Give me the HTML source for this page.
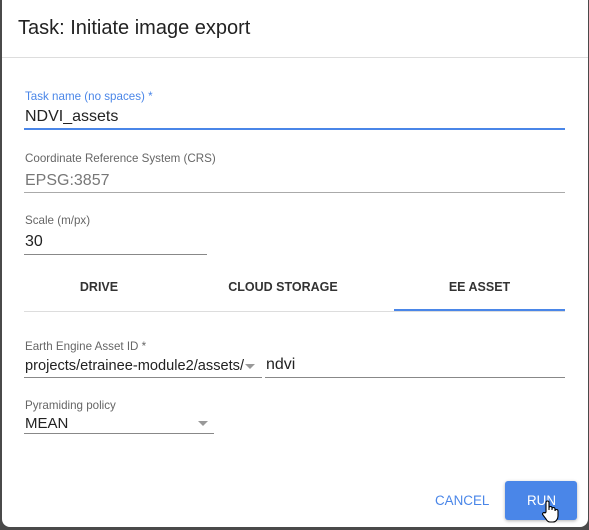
<!DOCTYPE html>
<html><head><style>
body{margin:0;width:589px;height:530px;background:#4a4a4a;position:relative;overflow:hidden;font-family:"Liberation Sans",Arial,sans-serif}
.dlg{position:absolute;left:2px;top:0;width:586px;height:527px;background:#fff;border-radius:0 0 8px 8px}
.a{position:absolute;white-space:nowrap}
.lbl{font-size:11.6px;color:#666}
.val{font-size:16px;color:#222}
.ln{position:absolute;height:1px;background:#888}
.tab{position:absolute;top:280px;font-size:12.5px;font-weight:bold;color:#333;text-align:center}
</style></head><body>
<div class="dlg"></div>
<div class="a" style="left:18px;top:17px;font-size:20px;color:#222">Task: Initiate image export</div>
<div style="position:absolute;left:2px;top:57px;width:586px;height:1px;background:#ddd"></div>

<div class="a lbl" style="left:25px;top:90px;color:#4a86e8">Task name (no spaces) *</div>
<div class="a val" style="left:25px;top:108px">NDVI_assets</div>
<div class="ln" style="left:24px;top:128px;width:541px;height:2px;background:#4a86e8"></div>

<div class="a lbl" style="left:25px;top:152px">Coordinate Reference System (CRS)</div>
<div class="a val" style="left:25px;top:172px;color:#777">EPSG:3857</div>
<div class="ln" style="left:24px;top:192px;width:541px;background:#aaa"></div>

<div class="a lbl" style="left:25px;top:214px">Scale (m/px)</div>
<div class="a val" style="left:25px;top:233px">30</div>
<div class="ln" style="left:24px;top:254px;width:183px"></div>

<div class="tab" style="left:24px;width:150px">DRIVE</div>
<div class="tab" style="left:198px;width:170px">CLOUD STORAGE</div>
<div class="tab" style="left:394px;width:171px">EE ASSET</div>
<div style="position:absolute;left:24px;top:311px;width:541px;height:1px;background:#ddd"></div>
<div style="position:absolute;left:394px;top:309px;width:171px;height:2px;background:#4a86e8"></div>

<div class="a lbl" style="left:25px;top:340px">Earth Engine Asset ID *</div>
<div class="a val" style="left:25px;top:358px;font-size:14.6px">projects/etrainee-module2/assets/</div>
<div class="a" style="left:245px;top:364px;width:0;height:0;border-left:5px solid transparent;border-right:5px solid transparent;border-top:5px solid #999"></div>
<div class="ln" style="left:24px;top:377px;width:238px"></div>
<div class="a val" style="left:266px;top:356px">ndvi</div>
<div class="ln" style="left:265px;top:377px;width:300px"></div>

<div class="a lbl" style="left:25px;top:399px">Pyramiding policy</div>
<div class="a val" style="left:25px;top:415px;font-size:15px">MEAN</div>
<div class="a" style="left:198px;top:421px;width:0;height:0;border-left:5px solid transparent;border-right:5px solid transparent;border-top:5px solid #999"></div>
<div class="ln" style="left:24px;top:433px;width:190px"></div>

<div class="a" style="left:435px;top:493px;font-size:13.4px;color:#4a86e8">CANCEL</div>
<div style="position:absolute;left:505px;top:481px;width:72px;height:39px;background:#4a86e8;border-radius:3px;box-shadow:0 1px 3px rgba(0,0,0,.3)"></div>
<div class="a" style="left:527px;top:493px;font-size:13.4px;color:#fff">RUN</div>
<svg style="position:absolute;left:541px;top:500px" width="20" height="24" viewBox="0 0 20 24"><path d="M5 12V2.5a1.5 1.5 0 0 1 3 0V10V8a1.5 1.5 0 0 1 3 0v2V9a1.5 1.5 0 0 1 3 0v2a1.5 1.5 0 0 1 3 0v5c0 3-2 6-5 6H9c-2 0-3-1-4-3L2 15a1.4 1.4 0 0 1 2-2z" fill="#fff" stroke="#000" stroke-width="1.1"/></svg>
</body></html>
